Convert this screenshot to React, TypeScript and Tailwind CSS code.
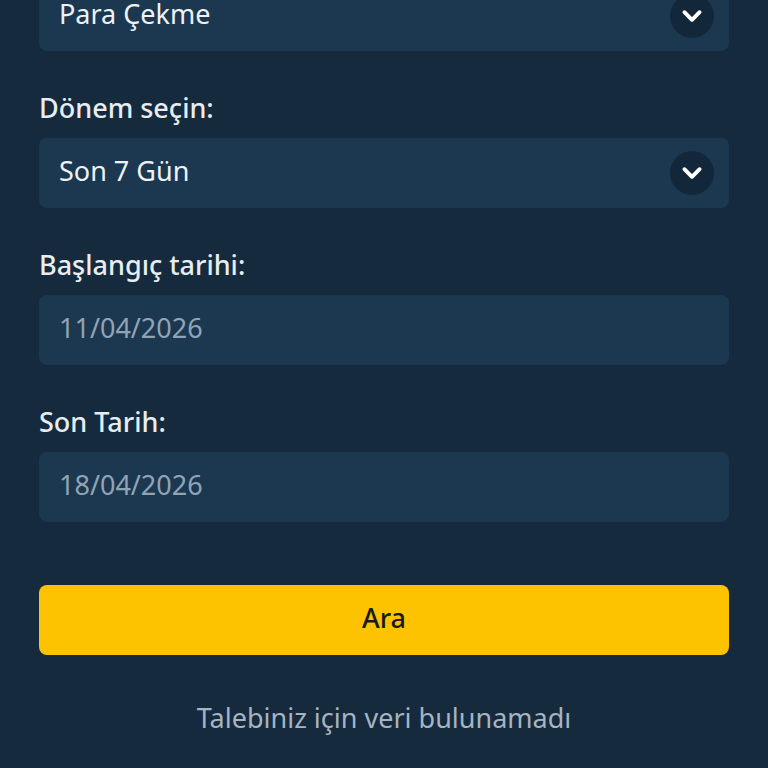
import React, { useState } from 'react';

type Option = { value: string; label: string };

const txOptions: Option[] = [
  { value: 'withdraw', label: 'Para Çekme' },
  { value: 'deposit', label: 'Para Yatırma' },
];

const periodOptions: Option[] = [
  { value: '7', label: 'Son 7 Gün' },
  { value: '30', label: 'Son 30 Gün' },
];

const Chevron: React.FC = () => (
  <span className="flex h-[44px] w-[44px] items-center justify-center rounded-full bg-[#13273a]">
    <svg width="26" height="26" viewBox="0 0 24 24" fill="none">
      <path d="M5 8.5l7 7 7-7" stroke="#ffffff" strokeWidth="3.6" strokeLinecap="round" strokeLinejoin="round" />
    </svg>
  </span>
);

const SelectBox: React.FC<{ options: Option[]; value: string; onChange: (v: string) => void }> = ({ options, value, onChange }) => {
  const current = options.find(o => o.value === value);
  return (
    <div className="relative flex h-[70px] items-center rounded-lg bg-[#1b3850] pl-5 pr-[15px]">
      <span className="flex-1 pb-[4px] text-[27px] leading-[32px] text-[#eef2f5]">{current?.label}</span>
      <Chevron />
      <select
        value={value}
        onChange={e => onChange(e.target.value)}
        className="absolute inset-0 cursor-pointer opacity-0"
      >
        {options.map(o => (
          <option key={o.value} value={o.value}>{o.label}</option>
        ))}
      </select>
    </div>
  );
};

const Label: React.FC<{ children: React.ReactNode }> = ({ children }) => (
  <div className="mt-[41px] mb-[14px] text-[27px] font-medium leading-[32px] text-[#e8edf1]">{children}</div>
);

const DateBox: React.FC<{ value: string }> = ({ value }) => (
  <div className="flex h-[70px] items-center rounded-lg bg-[#1b3850] px-5 pb-[4px] text-[27px] leading-[32px] text-[#91a4b6]">{value}</div>
);

const App: React.FC = () => {
  const [tx, setTx] = useState('withdraw');
  const [period, setPeriod] = useState('7');

  return (
    <div className="min-h-screen overflow-hidden bg-[#152a3d] font-['Noto_Sans',sans-serif]">
      <div className="-mt-[19px] px-[39px] pb-10">
        <SelectBox options={txOptions} value={tx} onChange={setTx} />

        <Label>Dönem seçin:</Label>
        <SelectBox options={periodOptions} value={period} onChange={setPeriod} />

        <Label>Başlangıç tarihi:</Label>
        <DateBox value="11/04/2026" />

        <Label>Son Tarih:</Label>
        <DateBox value="18/04/2026" />

        <button className="mt-[63px] flex h-[70px] w-full items-center justify-center rounded-lg bg-[#fdc300] pb-[4px] text-[27px] font-medium text-[#1a1a1a]">
          Ara
        </button>

        <p className="mt-[48px] text-center text-[27px] leading-[30px] text-[#a6b4c1]">Talebiniz için veri bulunamadı</p>
      </div>
    </div>
  );
};

export default App;
